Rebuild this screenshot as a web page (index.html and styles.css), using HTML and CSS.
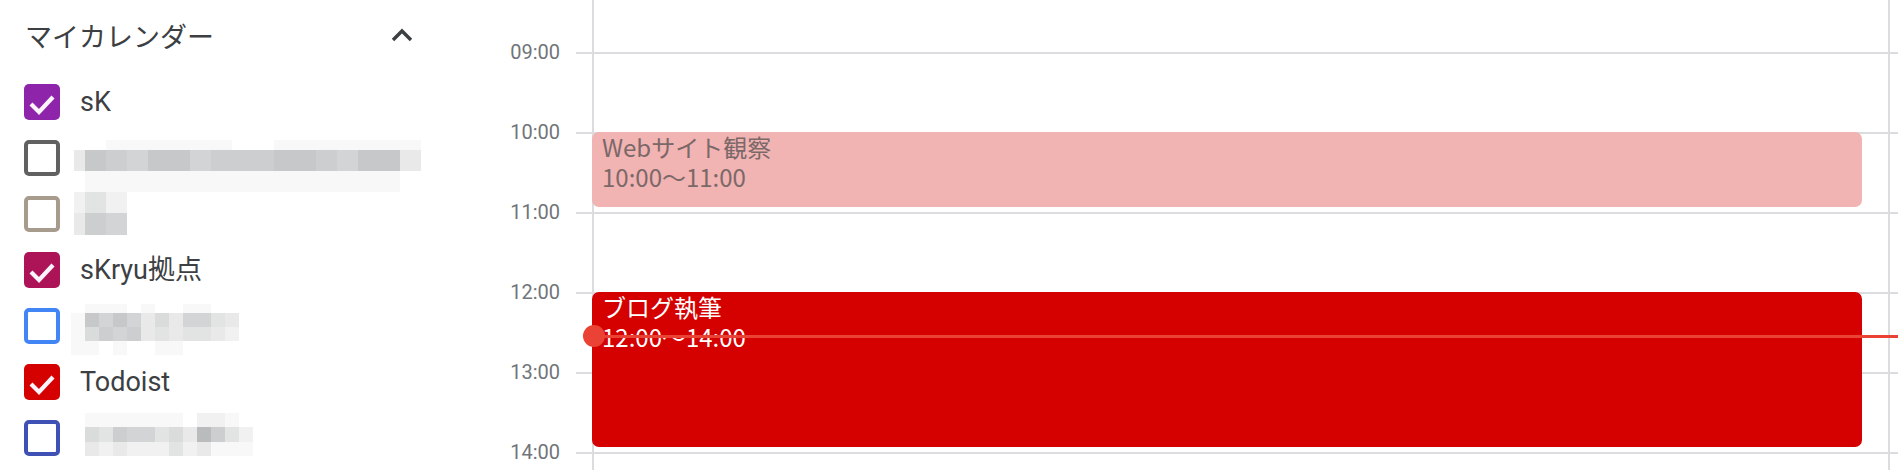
FILE: index.html
```html
<!DOCTYPE html>
<html lang="ja">
<head>
<meta charset="utf-8">
<title>カレンダー</title>
<link rel="stylesheet" href="styles.css">
</head>
<body>
<div class="app">
  <aside class="sidebar">
    <div class="cal-head">
      <span class="cal-title">マイカレンダー</span>
      <svg class="chev" viewBox="0 0 24 24"><polyline points="3,17 12,8 21,17"/></svg>
    </div>
    <ul class="cal-list">
      <li class="cal-item">
        <span class="cb cb-on c-purple"><svg viewBox="0 0 36 36"><polyline points="7,20 15,28 29,13"/></svg></span>
        <span class="cal-name">sK</span>
      </li>
      <li class="cal-item">
        <span class="cb c-gray"></span>
        <div class="mz mz-a">
          <i class="k0"></i><i class="k0"></i><i class="k1"></i><i class="k1"></i><i class="k1"></i><i class="k1"></i><i class="k1"></i><i class="k1"></i><i class="k0"></i><i class="k0"></i><i class="k1"></i><i class="k1"></i><i class="k1"></i><i class="k1"></i><i class="k1"></i><i class="k1"></i><i class="k1"></i>
          <i class="k3"></i><i class="k8"></i><i class="k7"></i><i class="k6"></i><i class="k8"></i><i class="k8"></i><i class="k6"></i><i class="k7"></i><i class="k7"></i><i class="k7"></i><i class="k8"></i><i class="k8"></i><i class="k7"></i><i class="k6"></i><i class="k8"></i><i class="k8"></i><i class="k3"></i>
          <i class="k0"></i><i class="k1"></i><i class="k1"></i><i class="k1"></i><i class="k1"></i><i class="k1"></i><i class="k1"></i><i class="k1"></i><i class="k1"></i><i class="k1"></i><i class="k1"></i><i class="k1"></i><i class="k1"></i><i class="k1"></i><i class="k1"></i><i class="k1"></i><i class="k0"></i>
        </div>
      </li>
      <li class="cal-item">
        <span class="cb c-taupe"></span>
        <div class="mz mz-b">
          <i class="k2"></i><i class="k4"></i><i class="k2"></i>
          <i class="k3"></i><i class="k7"></i><i class="k6"></i>
        </div>
      </li>
      <li class="cal-item">
        <span class="cb cb-on c-magenta"><svg viewBox="0 0 36 36"><polyline points="7,20 15,28 29,13"/></svg></span>
        <span class="cal-name">sKryu拠点</span>
      </li>
      <li class="cal-item">
        <span class="cb c-blue"></span>
        <div class="mz mz-c">
          <i class="k0"></i><i class="k1"></i><i class="k1"></i><i class="k1"></i><i class="k0"></i><i class="k1"></i><i class="k0"></i><i class="k0"></i><i class="k1"></i><i class="k1"></i><i class="k0"></i><i class="k0"></i>
          <i class="k1"></i><i class="k8"></i><i class="k6"></i><i class="k8"></i><i class="k6"></i><i class="k3"></i><i class="k5"></i><i class="k3"></i><i class="k6"></i><i class="k6"></i><i class="k4"></i><i class="k3"></i>
          <i class="k1"></i><i class="k5"></i><i class="k7"></i><i class="k6"></i><i class="k7"></i><i class="k3"></i><i class="k4"></i><i class="k3"></i><i class="k4"></i><i class="k4"></i><i class="k3"></i><i class="k2"></i>
          <i class="k1"></i><i class="k1"></i><i class="k0"></i><i class="k1"></i><i class="k0"></i><i class="k0"></i><i class="k1"></i><i class="k1"></i><i class="k0"></i><i class="k0"></i><i class="k0"></i><i class="k0"></i>
        </div>
      </li>
      <li class="cal-item">
        <span class="cb cb-on c-red"><svg viewBox="0 0 36 36"><polyline points="7,20 15,28 29,13"/></svg></span>
        <span class="cal-name">Todoist</span>
      </li>
      <li class="cal-item">
        <span class="cb c-indigo"></span>
        <div class="mz mz-d">
          <i class="k1"></i><i class="k1"></i><i class="k1"></i><i class="k1"></i><i class="k1"></i><i class="k1"></i><i class="k1"></i><i class="k0"></i><i class="k2"></i><i class="k2"></i><i class="k1"></i><i class="k0"></i>
          <i class="k5"></i><i class="k4"></i><i class="k7"></i><i class="k6"></i><i class="k6"></i><i class="k4"></i><i class="k5"></i><i class="k3"></i><i class="k9"></i><i class="k7"></i><i class="k4"></i><i class="k2"></i>
          <i class="k3"></i><i class="k2"></i><i class="k3"></i><i class="k2"></i><i class="k2"></i><i class="k2"></i><i class="k4"></i><i class="k2"></i><i class="k3"></i><i class="k1"></i><i class="k1"></i><i class="k1"></i>
        </div>
      </li>
    </ul>
  </aside>

  <main class="calendar">
    <div class="gutter">
      <div class="labels">
        <div class="hr">09:00</div>
        <div class="hr">10:00</div>
        <div class="hr">11:00</div>
        <div class="hr">12:00</div>
        <div class="hr">13:00</div>
        <div class="hr">14:00</div>
      </div>
      <div class="ticks"></div>
    </div>
    <div class="day">
      <div class="event ev-past" style="top:132px;height:75px">
        <div>Webサイト観察</div>
        <div>10:00〜11:00</div>
      </div>
      <div class="event ev-red" style="top:292px;height:155px">
        <div>ブログ執筆</div>
        <div>12:00〜14:00</div>
      </div>
    </div>
    <div class="next"></div>
    <div class="now"><span class="now-dot"></span></div>
  </main>
</div>
</body>
</html>
```

FILE: styles.css
```css
html, body {
  margin: 0;
  padding: 0;
  background: #fff;
  overflow: hidden;
}

body {
  font-family: Roboto, "Noto Sans CJK JP", sans-serif;
}

.app {
  display: flex;
  height: 470px;
}

/* ---------- sidebar ---------- */
.sidebar {
  width: 440px;
  flex: none;
}

.cal-head {
  height: 70px;
  box-sizing: border-box;
  padding: 0 26px 0 25px;
  display: flex;
  align-items: center;
  justify-content: space-between;
}

.cal-title {
  font-family: "Noto Sans CJK JP", sans-serif;
  font-size: 27px;
  line-height: 1;
  color: #3c4043;
}

.chev {
  width: 24px;
  height: 24px;
  fill: none;
  stroke: #3c4043;
  stroke-width: 3.4;
}

.cal-list {
  list-style: none;
  margin: 0;
  padding: 4px 0 0 0;
}

.cal-item {
  height: 56px;
  display: flex;
  align-items: center;
  gap: 20px;
  padding-left: 24px;
}

.cal-name {
  font-size: 27px;
  color: #3c4043;
  line-height: 1;
}

.cb {
  width: 36px;
  height: 36px;
  flex: none;
  box-sizing: border-box;
  border: 4px solid currentColor;
  border-radius: 5px;
}

.cb-on {
  border-width: 0;
  background: currentColor;
}

.cb svg {
  display: block;
  width: 36px;
  height: 36px;
  fill: none;
  stroke: #fbf4fb;
  stroke-width: 4.2;
}

.c-purple { color: #8e24aa; }
.c-gray { color: #616161; }
.c-taupe { color: #a79b8e; }
.c-magenta { color: #ad1457; }
.c-blue { color: #4285f4; }
.c-red { color: #d50000; }
.c-indigo { color: #3f51b5; }

/* pixelated (hidden) calendar names */
.mz {
  display: grid;
  align-self: flex-start;
}

.mz i {
  display: block;
}

.mz-a {
  margin: 10px 0 0 -6px;
  grid-template-columns: 11px repeat(16, 21px);
  grid-template-rows: 10px 21px 21px;
}

.mz-b {
  margin: 6px 0 0 -6px;
  grid-template-columns: 11px 21px 21px;
  grid-template-rows: 21px 22px;
}

.mz-c {
  margin: 6px 0 0 -9px;
  grid-template-columns: repeat(12, 14px);
  grid-template-rows: 9px 14px 14px 14px;
}

.mz-d {
  margin: 3px 0 0 5px;
  grid-template-columns: repeat(12, 14px);
  grid-template-rows: 14px 15px 14px;
}

.k0 { background: transparent; }
.k1 { background: #f8f8f8; }
.k2 { background: #f1f1f1; }
.k3 { background: #e9e9e9; }
.k4 { background: #e2e3e3; }
.k5 { background: #dadbdb; }
.k6 { background: #d3d4d5; }
.k7 { background: #cdcecf; }
.k8 { background: #c7c8c9; }
.k9 { background: #babbbc; }

/* ---------- calendar ---------- */
.calendar {
  flex: 1;
  display: flex;
  position: relative;
  height: 470px;
  overflow: hidden;
}

.gutter {
  width: 152px;
  flex: none;
  display: flex;
}

.labels {
  width: 120px;
  margin-right: 16px;
  padding-top: 40px;
}

.hr {
  height: 80px;
  line-height: 24px;
  text-align: right;
  font-size: 20px;
  color: #70757a;
}

.ticks,
.day,
.next {
  background: repeating-linear-gradient(to bottom,
    transparent 0 52px,
    #dadce0 52px 54px,
    transparent 54px 80px);
}

.ticks {
  width: 16px;
}

.day {
  width: 1298px;
  flex: none;
  box-sizing: border-box;
  border-left: 2px solid #dadce0;
  border-right: 2px solid #dadce0;
  position: relative;
}

.next {
  flex: 1;
}

.event {
  position: absolute;
  left: -2px;
  width: 1270px;
  box-sizing: border-box;
  padding: 0 10px;
  border-radius: 7px;
  font-family: "Noto Sans CJK JP", sans-serif;
  font-size: 24px;
  line-height: 30px;
}

.ev-past {
  background: #f2b3b3;
  color: #7b6868;
}

.ev-red {
  background: #d50000;
  color: #fff;
}

.now {
  position: absolute;
  left: 154px;
  right: 0;
  top: 334.5px;
  height: 3px;
  background: #ea4335;
}

.now-dot {
  position: absolute;
  left: -11.5px;
  top: -9.5px;
  width: 22px;
  height: 22px;
  border-radius: 50%;
  background: #ea4335;
}
```
